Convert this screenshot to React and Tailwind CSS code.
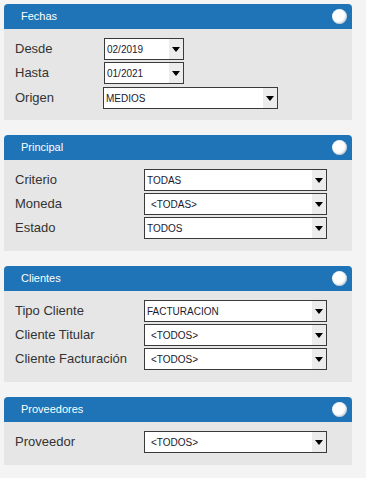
import React from "react";

const PANELS = [
  {
    title: "Fechas",
    selectLeft: "w-[89px]",
    pb: "pb-[11px]",
    rows: [
      { label: "Desde", value: "02/2019", width: "w-[80px]" },
      { label: "Hasta", value: "01/2021", width: "w-[80px]" },
      { label: "Origen", value: "MEDIOS", width: "w-[175px] -ml-[1px]", extra: "mt-[1px]" },
    ],
  },
  {
    title: "Principal",
    selectLeft: "w-[129px]",
    pb: "pb-[12px]",
    rows: [
      { label: "Criterio", value: "TODAS" },
      { label: "Moneda", value: "<TODAS>", indent: true },
      { label: "Estado", value: "TODOS" },
    ],
  },
  {
    title: "Clientes",
    selectLeft: "w-[129px]",
    pb: "pb-[12px]",
    rows: [
      { label: "Tipo Cliente", value: "FACTURACION" },
      { label: "Cliente Titular", value: "<TODOS>", indent: true },
      { label: "Cliente Facturación", value: "<TODOS>", indent: true },
    ],
  },
  {
    title: "Proveedores",
    selectLeft: "w-[129px]",
    pb: "pb-[12px]",
    rows: [{ label: "Proveedor", value: "<TODOS>", indent: true }],
  },
];

// fake combo box, like the old asp page
const Combo = ({ value, width = "w-[183px]", indent }) => (
  <div
    className={`${width} h-[22px] flex items-stretch border border-[#3a3a3a] bg-white`}
  >
    <span
      className={`flex-1 flex items-center text-[10px] text-[#1a1a2e] ${
        indent ? "pl-[6px]" : "pl-[2px]"
      }`}
    >
      {value}
    </span>
    <span className="w-[14px] flex items-center justify-center bg-[#ececec]">
      <svg width="8" height="5" viewBox="0 0 8 5">
        <path d="M0 0h8L4 5z" fill="#000" />
      </svg>
    </span>
  </div>
);

const Panel = ({ panel }) => (
  <div className="w-[348px] ml-1">
    {/* header */}
    <div className="h-[25px] rounded-t-[4px] bg-[#1e74b7] flex items-center justify-between pl-[17px] pr-[5px]">
      <span className="text-[11px] text-white">{panel.title}</span>
      <span className="w-[15px] h-[15px] rounded-full bg-white shadow-[inset_-1px_-1px_2px_rgba(60,90,130,0.35)]" />
    </div>

    {/* body */}
    <div className={`bg-[#e6e6e6] pt-[9px] ${panel.pb} pl-[11px] flex flex-col gap-[2px]`}>
      {panel.rows.map((row) => (
        <div key={row.label} className={`flex items-center ${row.extra || ""}`}>
          <span className={`${panel.selectLeft} shrink-0 text-[13px] text-[#333]`}>
            {row.label}
          </span>
          <Combo value={row.value} width={row.width} indent={row.indent} />
        </div>
      ))}
    </div>
  </div>
);

export default function App() {
  return (
    <div
      className="w-[366px] h-[478px] bg-[#f4f4f4] pt-1 flex flex-col gap-[15px]"
      style={{ fontFamily: '"Liberation Sans", Arial, sans-serif' }}
    >
      {PANELS.map((p) => (
        <Panel key={p.title} panel={p} />
      ))}
    </div>
  );
}
